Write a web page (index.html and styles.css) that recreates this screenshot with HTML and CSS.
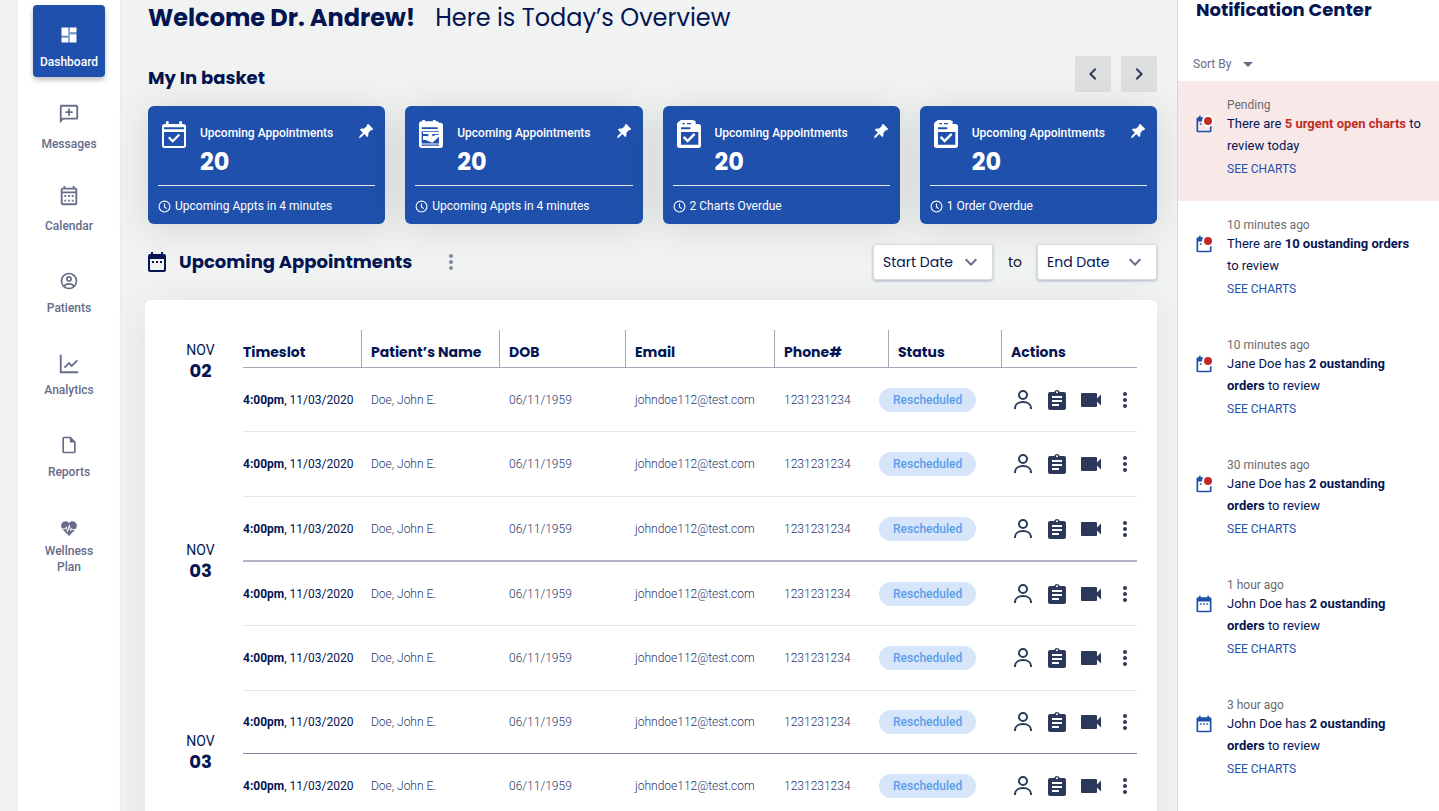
FILE: index.html
```html
<!DOCTYPE html>
<html lang="en">
<head>
<meta charset="utf-8">
<meta name="viewport" content="width=device-width, initial-scale=1">
<title>Dashboard</title>
<link rel="stylesheet" href="styles.css">
</head>
<body>
<svg class="sprite" aria-hidden="true">
  <symbol id="i-dash" viewBox="0 0 24 24"><path d="M3 3h8v10H3zM3 15h8v6H3zM13 3h8v6h-8zM13 11h8v10h-8z"/><path opacity=".5" d="M11 3h2v18h-2zM13 10h8v1h-8zM3 13h8v1H3z"/></symbol>
  <symbol id="i-msg" viewBox="0 0 24 24"><path d="M20 2H4a2 2 0 0 0-2 2v18l4-4h14a2 2 0 0 0 2-2V4a2 2 0 0 0-2-2zm0 14H5.200L4 17.200V4h16v12zM11 14h2v-3h3V9h-3V6h-2v3H8v2h3z"/></symbol>
  <symbol id="i-cal" viewBox="0 0 24 24"><path fill-rule="evenodd" d="M6 1h2v2h8V1h2v2h1a2 2 0 0 1 2 2v15a2 2 0 0 1-2 2H5a2 2 0 0 1-2-2V5a2 2 0 0 1 2-2h1zM5 5v2h14V5zm0 4v11h14V9zM7 11h2v2H7zm4 0h2v2h-2zm4 0h2v2h-2zM7 16h2v2H7zm4 0h2v2h-2zm4 0h2v2h-2z"/></symbol>
  <symbol id="i-acct" viewBox="0 0 24 24"><g fill="none" stroke="currentColor" stroke-width="2"><circle cx="12" cy="12" r="9"/><circle cx="12" cy="9.500" r="2.500"/><path d="M6 18.500c1-2 3.500-3 6-3s5 1 6 3"/></g></symbol>
  <symbol id="i-chart" viewBox="0 0 24 24"><path fill="none" stroke="currentColor" stroke-width="2" d="M3 2v19h19M7 16l5-5 3 3 6-6"/></symbol>
  <symbol id="i-file" viewBox="0 0 24 24"><path fill-rule="evenodd" d="M6 2h8l6 6v12a2 2 0 0 1-2 2H6a2 2 0 0 1-2-2V4a2 2 0 0 1 2-2zm0 2v16h12V9h-5V4z"/></symbol>
  <symbol id="i-heart" viewBox="0 0 24 24"><path d="M12 22.500 3.600 14C.5 10.500 1 5.800 4.500 3.800 7 2.300 10 3 12 5.500c2-2.500 5-3.200 7.500-1.700 3.500 2 4 6.700.9 10.200z"/><path fill="none" stroke="#fff" stroke-width="1.300" d="M3 13h4l1.500-2.500L10 17l2.500-9 1.500 8 1.500-3.500 1 1.500H21"/></symbol>
  <symbol id="i-gear" viewBox="0 0 24 24"><path d="M19.430 12.980c.04-.32.07-.64.07-.98s-.03-.66-.07-.98l2.110-1.650c.19-.15.24-.42.12-.64l-2-3.460c-.12-.22-.39-.3-.61-.22l-2.490 1c-.52-.4-1.080-.73-1.690-.98l-.38-2.650A.49.49 0 0 0 14 2h-4c-.25 0-.46.18-.49.42l-.38 2.650c-.61.25-1.170.59-1.690.98l-2.490-1c-.23-.09-.49 0-.61.22l-2 3.460c-.13.22-.07.49.12.64l2.110 1.650c-.04.32-.07.65-.07.98s.03.66.07.98l-2.110 1.650c-.19.15-.24.42-.12.64l2 3.460c.12.22.39.3.61.22l2.490-1c.52.4 1.080.73 1.690.98l.38 2.650c.03.24.24.42.49.42h4c.25 0 .46-.18.49-.42l.38-2.650c.61-.25 1.170-.59 1.690-.98l2.490 1c.23.09.49 0 .61-.22l2-3.460c.12-.22.07-.49-.12-.64zM12 15.500a3.500 3.500 0 1 1 0-7 3.500 3.500 0 0 1 0 7z"/></symbol>
  <symbol id="i-left" viewBox="0 0 24 24"><path d="M15.410 7.410 14 6l-6 6 6 6 1.410-1.410L10.830 12z"/></symbol>
  <symbol id="i-right" viewBox="0 0 24 24"><path d="M8.590 16.590 10 18l6-6-6-6-1.410 1.410L13.170 12z"/></symbol>
  <symbol id="i-down" viewBox="0 0 24 24"><path d="M16.590 8.590 12 13.170 7.410 8.590 6 10l6 6 6-6z"/></symbol>
  <symbol id="i-evcheck" viewBox="0 0 24 24"><path fill-rule="evenodd" d="M6 1h2v2h8V1h2v2h1a2 2 0 0 1 2 2v14a2 2 0 0 1-2 2H5a2 2 0 0 1-2-2V5a2 2 0 0 1 2-2h1zM4.500 5.500v1.500h15V5.500zm0 3.500v10.500h15V9z"/><path d="m11 17-3.500-3.500 1.100-1.100L11 14.800l4.500-4.500 1.100 1.100z"/></symbol>
  <symbol id="i-evstack" viewBox="0 0 24 24"><path fill-rule="evenodd" d="M5.500 1V0h2v1h6V0h2v1H17l1 1h1a2 2 0 0 1 2 2v15a2 2 0 0 1-2 2H5a2 2 0 0 1-2-2V3a2 2 0 0 1 2-2zM5 5.500v1.200h12V5.500zm0 3v9.200h13V8.500zm0 9.800v1h13v-1z"/><path d="M6 9h12v1.500H6zM6 12h3l2 1 5-2h2v1.500L13 17l-5-2H6zM10 9h3v4h-3z"/></symbol>
  <symbol id="i-clipcheck" viewBox="0 0 24 24"><path fill-rule="evenodd" d="M6 0h9l2 1v2h2a2 2 0 0 1 2 2v14a2 2 0 0 1-2 2H5a2 2 0 0 1-2-2V3a2 2 0 0 1 1-1.500zM7 2.300v.9h2v-.9zm3.500 0v.9h3v-.9zM6 5.500v1.500h7V5.500zM6 9v9.500h13V9z"/><path d="m11 17-3.700-3.700 1.300-1.300 2.400 2.400 4.600-4.600 1.300 1.300z"/></symbol>
  <symbol id="i-pin" viewBox="0 0 24 24"><path transform="rotate(45 12 12)" d="M6.500 0h11v3.500H16l.8 6.500c2 1 3.200 2.800 3.200 5h-6.500v6.500L12 25l-1.500-3.500V15H4c0-2.200 1.200-4 3.200-5L8 3.500H6.500z"/></symbol>
  <symbol id="i-clock" viewBox="0 0 24 24"><circle cx="12" cy="12" r="10" fill="none" stroke="currentColor" stroke-width="2"/><path fill="none" stroke="currentColor" stroke-width="2" d="M12 6.500V13l4 3"/></symbol>
  <symbol id="i-event" viewBox="0 0 24 24"><path fill-rule="evenodd" d="M6 2h2v2h8V2h2v2h1a2 2 0 0 1 2 2v14a2 2 0 0 1-2 2H5a2 2 0 0 1-2-2V6a2 2 0 0 1 2-2h1zM5 9v11h14V9zM7 11h2v2H7zm4 0h2v2h-2zm4 0h2v2h-2z"/></symbol>
  <symbol id="i-more" viewBox="0 0 24 24"><circle cx="12" cy="6" r="2"/><circle cx="12" cy="12" r="2"/><circle cx="12" cy="18" r="2"/></symbol>
  <symbol id="i-user" viewBox="0 0 24 24"><g fill="none" stroke="currentColor" stroke-width="2"><circle cx="12" cy="7" r="4"/><path d="M4 21v-1c0-3.500 3.200-6 8-6s8 2.500 8 6v1"/></g></symbol>
  <symbol id="i-clip" viewBox="0 0 24 24"><path fill-rule="evenodd" d="M5 4h4.200a3 3 0 0 1 5.600 0H19a2 2 0 0 1 2 2v14a2 2 0 0 1-2 2H5a2 2 0 0 1-2-2V6a2 2 0 0 1 2-2zm7-.8a1 1 0 1 0 0 2 1 1 0 0 0 0-2zM7 8v2h10V8zm0 4v2h10v-2zm0 4v2h7v-2z"/></symbol>
  <symbol id="i-video" viewBox="0 0 24 24"><path d="M3 5h14a1 1 0 0 1 1 1v4.500l4-4v11l-4-4V18a1 1 0 0 1-1 1H3a1 1 0 0 1-1-1V6a1 1 0 0 1 1-1z"/></symbol>
</svg>

<div class="app">
  <nav class="sidebar" aria-label="Main">
    <a class="nav-item nav-item-active" href="#"><svg class="nav-icon nav-icon-small"><use href="#i-dash"/></svg><span>Dashboard</span></a>
    <a class="nav-item" href="#"><svg class="nav-icon"><use href="#i-msg"/></svg><span>Messages</span></a>
    <a class="nav-item" href="#"><svg class="nav-icon"><use href="#i-cal"/></svg><span>Calendar</span></a>
    <a class="nav-item nav-item-low" href="#"><svg class="nav-icon nav-icon-small"><use href="#i-acct"/></svg><span>Patients</span></a>
    <a class="nav-item nav-item-low" href="#"><svg class="nav-icon"><use href="#i-chart"/></svg><span>Analytics</span></a>
    <a class="nav-item nav-item-low" href="#"><svg class="nav-icon nav-icon-small"><use href="#i-file"/></svg><span>Reports</span></a>
    <a class="nav-item nav-item-tall" href="#"><svg class="nav-icon nav-icon-heart"><use href="#i-heart"/></svg><span>Wellness Plan</span></a>
    <div class="sidebar-foot"><a class="settings" href="#" aria-label="Settings"><svg class="icon-20"><use href="#i-gear"/></svg></a></div>
  </nav>

  <main class="main">
    <h1 class="welcome"><strong>Welcome Dr. Andrew!</strong><span>Here is Today’s Overview</span></h1>

    <section class="basket">
      <div class="basket-head">
        <h2 class="section-title">My In basket</h2>
        <div class="pager">
          <button class="pager-btn" type="button" aria-label="Previous"><svg class="icon-24"><use href="#i-left"/></svg></button>
          <button class="pager-btn" type="button" aria-label="Next"><svg class="icon-24"><use href="#i-right"/></svg></button>
        </div>
      </div>
      <div class="cards">
        <article class="card">
          <div class="card-top"><svg class="card-icon"><use href="#i-evcheck"/></svg><div class="card-text"><h3 class="card-title">Upcoming Appointments</h3><p class="card-num">20</p></div><svg class="card-pin"><use href="#i-pin"/></svg></div>
          <p class="card-foot"><svg class="card-clock"><use href="#i-clock"/></svg>Upcoming Appts in 4 minutes</p>
        </article>
        <article class="card">
          <div class="card-top"><svg class="card-icon"><use href="#i-evstack"/></svg><div class="card-text"><h3 class="card-title">Upcoming Appointments</h3><p class="card-num">20</p></div><svg class="card-pin"><use href="#i-pin"/></svg></div>
          <p class="card-foot"><svg class="card-clock"><use href="#i-clock"/></svg>Upcoming Appts in 4 minutes</p>
        </article>
        <article class="card">
          <div class="card-top"><svg class="card-icon"><use href="#i-clipcheck"/></svg><div class="card-text"><h3 class="card-title">Upcoming Appointments</h3><p class="card-num">20</p></div><svg class="card-pin"><use href="#i-pin"/></svg></div>
          <p class="card-foot"><svg class="card-clock"><use href="#i-clock"/></svg>2 Charts Overdue</p>
        </article>
        <article class="card">
          <div class="card-top"><svg class="card-icon"><use href="#i-clipcheck"/></svg><div class="card-text"><h3 class="card-title">Upcoming Appointments</h3><p class="card-num">20</p></div><svg class="card-pin"><use href="#i-pin"/></svg></div>
          <p class="card-foot"><svg class="card-clock"><use href="#i-clock"/></svg>1 Order Overdue</p>
        </article>
      </div>
    </section>

    <div class="appt-head">
      <svg class="icon-24"><use href="#i-event"/></svg>
      <h2 class="section-title">Upcoming Appointments</h2>
      <button class="icon-btn appt-more" type="button" aria-label="More"><svg class="icon-24"><use href="#i-more"/></svg></button>
      <div class="range">
        <div class="date-field"><select class="date-select" aria-label="Start date"><option>Start Date</option></select><svg class="date-arrow"><use href="#i-down"/></svg></div>
        <span class="range-to">to</span>
        <div class="date-field"><select class="date-select" aria-label="End date"><option>End Date</option></select><svg class="date-arrow"><use href="#i-down"/></svg></div>
      </div>
    </div>

    <section class="panel">
      <ol class="days">
        <li class="day"><span>NOV</span><strong>02</strong></li>
        <li class="day"><span>NOV</span><strong>03</strong></li>
        <li class="day"><span>NOV</span><strong>03</strong></li>
      </ol>
      <table class="appts">
        <colgroup><col class="c-time"><col class="c-name"><col class="c-dob"><col class="c-email"><col class="c-phone"><col class="c-status"><col class="c-actions"></colgroup>
        <thead><tr><th scope="col">Timeslot</th><th scope="col">Patient’s Name</th><th scope="col">DOB</th><th scope="col">Email</th><th scope="col">Phone#</th><th scope="col">Status</th><th scope="col">Actions</th></tr></thead>
        <tbody>
          <tr><td><strong>4:00pm</strong>, 11/03/2020</td><td>Doe, John E.</td><td>06/11/1959</td><td>johndoe112@test.com</td><td>1231231234</td><td><span class="pill">Rescheduled</span></td><td><div class="actions"><button class="icon-btn" type="button" aria-label="Profile"><svg class="icon-24"><use href="#i-user"/></svg></button><button class="icon-btn" type="button" aria-label="Chart"><svg class="icon-24"><use href="#i-clip"/></svg></button><button class="icon-btn" type="button" aria-label="Video call"><svg class="icon-24"><use href="#i-video"/></svg></button><button class="icon-btn" type="button" aria-label="More"><svg class="icon-24"><use href="#i-more"/></svg></button></div></td></tr>
          <tr><td><strong>4:00pm</strong>, 11/03/2020</td><td>Doe, John E.</td><td>06/11/1959</td><td>johndoe112@test.com</td><td>1231231234</td><td><span class="pill">Rescheduled</span></td><td><div class="actions"><button class="icon-btn" type="button" aria-label="Profile"><svg class="icon-24"><use href="#i-user"/></svg></button><button class="icon-btn" type="button" aria-label="Chart"><svg class="icon-24"><use href="#i-clip"/></svg></button><button class="icon-btn" type="button" aria-label="Video call"><svg class="icon-24"><use href="#i-video"/></svg></button><button class="icon-btn" type="button" aria-label="More"><svg class="icon-24"><use href="#i-more"/></svg></button></div></td></tr>
          <tr class="row-thick"><td><strong>4:00pm</strong>, 11/03/2020</td><td>Doe, John E.</td><td>06/11/1959</td><td>johndoe112@test.com</td><td>1231231234</td><td><span class="pill">Rescheduled</span></td><td><div class="actions"><button class="icon-btn" type="button" aria-label="Profile"><svg class="icon-24"><use href="#i-user"/></svg></button><button class="icon-btn" type="button" aria-label="Chart"><svg class="icon-24"><use href="#i-clip"/></svg></button><button class="icon-btn" type="button" aria-label="Video call"><svg class="icon-24"><use href="#i-video"/></svg></button><button class="icon-btn" type="button" aria-label="More"><svg class="icon-24"><use href="#i-more"/></svg></button></div></td></tr>
        </tbody>
        <tbody>
          <tr><td><strong>4:00pm</strong>, 11/03/2020</td><td>Doe, John E.</td><td>06/11/1959</td><td>johndoe112@test.com</td><td>1231231234</td><td><span class="pill">Rescheduled</span></td><td><div class="actions"><button class="icon-btn" type="button" aria-label="Profile"><svg class="icon-24"><use href="#i-user"/></svg></button><button class="icon-btn" type="button" aria-label="Chart"><svg class="icon-24"><use href="#i-clip"/></svg></button><button class="icon-btn" type="button" aria-label="Video call"><svg class="icon-24"><use href="#i-video"/></svg></button><button class="icon-btn" type="button" aria-label="More"><svg class="icon-24"><use href="#i-more"/></svg></button></div></td></tr>
          <tr><td><strong>4:00pm</strong>, 11/03/2020</td><td>Doe, John E.</td><td>06/11/1959</td><td>johndoe112@test.com</td><td>1231231234</td><td><span class="pill">Rescheduled</span></td><td><div class="actions"><button class="icon-btn" type="button" aria-label="Profile"><svg class="icon-24"><use href="#i-user"/></svg></button><button class="icon-btn" type="button" aria-label="Chart"><svg class="icon-24"><use href="#i-clip"/></svg></button><button class="icon-btn" type="button" aria-label="Video call"><svg class="icon-24"><use href="#i-video"/></svg></button><button class="icon-btn" type="button" aria-label="More"><svg class="icon-24"><use href="#i-more"/></svg></button></div></td></tr>
          <tr class="row-last"><td><strong>4:00pm</strong>, 11/03/2020</td><td>Doe, John E.</td><td>06/11/1959</td><td>johndoe112@test.com</td><td>1231231234</td><td><span class="pill">Rescheduled</span></td><td><div class="actions"><button class="icon-btn" type="button" aria-label="Profile"><svg class="icon-24"><use href="#i-user"/></svg></button><button class="icon-btn" type="button" aria-label="Chart"><svg class="icon-24"><use href="#i-clip"/></svg></button><button class="icon-btn" type="button" aria-label="Video call"><svg class="icon-24"><use href="#i-video"/></svg></button><button class="icon-btn" type="button" aria-label="More"><svg class="icon-24"><use href="#i-more"/></svg></button></div></td></tr>
        </tbody>
        <tbody>
          <tr><td><strong>4:00pm</strong>, 11/03/2020</td><td>Doe, John E.</td><td>06/11/1959</td><td>johndoe112@test.com</td><td>1231231234</td><td><span class="pill">Rescheduled</span></td><td><div class="actions"><button class="icon-btn" type="button" aria-label="Profile"><svg class="icon-24"><use href="#i-user"/></svg></button><button class="icon-btn" type="button" aria-label="Chart"><svg class="icon-24"><use href="#i-clip"/></svg></button><button class="icon-btn" type="button" aria-label="Video call"><svg class="icon-24"><use href="#i-video"/></svg></button><button class="icon-btn" type="button" aria-label="More"><svg class="icon-24"><use href="#i-more"/></svg></button></div></td></tr>
        </tbody>
      </table>
    </section>
  </main>

  <aside class="notes">
    <h2 class="section-title notes-title">Notification Center</h2>
    <button class="sort" type="button">Sort By<span class="sort-arrow"></span></button>
    <ul class="note-list">
      <li class="note note-urgent"><span class="note-icon note-new"><svg class="icon-20"><use href="#i-event"/></svg></span><div><p class="note-time">Pending</p><p class="note-body">There are <strong>5 urgent open charts</strong> to review today</p><a class="note-link" href="#">SEE CHARTS</a></div></li>
      <li class="note"><span class="note-icon note-new"><svg class="icon-20"><use href="#i-event"/></svg></span><div><p class="note-time">10 minutes ago</p><p class="note-body">There are <strong>10 oustanding orders</strong> to review</p><a class="note-link" href="#">SEE CHARTS</a></div></li>
      <li class="note"><span class="note-icon note-new"><svg class="icon-20"><use href="#i-event"/></svg></span><div><p class="note-time">10 minutes ago</p><p class="note-body">Jane Doe has <strong>2 oustanding orders</strong> to review</p><a class="note-link" href="#">SEE CHARTS</a></div></li>
      <li class="note"><span class="note-icon note-new"><svg class="icon-20"><use href="#i-event"/></svg></span><div><p class="note-time">30 minutes ago</p><p class="note-body">Jane Doe has <strong>2 oustanding orders</strong> to review</p><a class="note-link" href="#">SEE CHARTS</a></div></li>
      <li class="note"><span class="note-icon"><svg class="icon-20"><use href="#i-event"/></svg></span><div><p class="note-time">1 hour ago</p><p class="note-body">John Doe has <strong>2 oustanding orders</strong> to review</p><a class="note-link" href="#">SEE CHARTS</a></div></li>
      <li class="note"><span class="note-icon"><svg class="icon-20"><use href="#i-event"/></svg></span><div><p class="note-time">3 hour ago</p><p class="note-body">John Doe has <strong>2 oustanding orders</strong> to review</p><a class="note-link" href="#">SEE CHARTS</a></div></li>
    </ul>
  </aside>
</div>
</body>
</html>
```

FILE: styles.css
```css
:root {
  --navy: #041552;
  --blue: #1f50ab;
  --slate: #666c89;
  --ink: #2c3859;
  --page: #f1f3f3;
  --display: Poppins, Inter, "Noto Sans", sans-serif;
}

*, *::before, *::after { box-sizing: border-box; }

body {
  margin: 0;
  background: var(--page);
  color: var(--navy);
  font: 12px/16px Roboto, "Liberation Sans", sans-serif;
}

h1, h2, h3, p, ul, ol { margin: 0; padding: 0; list-style: none; }
a { color: inherit; text-decoration: none; }
button { border: 0; padding: 0; background: none; color: inherit; font: inherit; cursor: pointer; }
svg { display: block; flex: none; fill: currentColor; }

.sprite { position: absolute; width: 0; height: 0; }
.icon-24 { width: 24px; height: 24px; }
.icon-20 { width: 20px; height: 20px; }
.icon-btn { display: block; }

.app {
  display: grid;
  grid-template-columns: 102px minmax(0, 1fr) 262px;
  height: 100vh;
  padding-left: 18px;
  overflow: hidden;
}

/* Sidebar */
.sidebar {
  display: flex;
  flex-direction: column;
  align-items: center;
  gap: 10px;
  padding: 5px 10px 4px;
  background: #fff;
  box-shadow: 0 0 2px rgba(0, 0, 0, .08);
}
.nav-item {
  display: flex;
  flex-direction: column;
  align-items: center;
  justify-content: space-between;
  width: 72px;
  height: 72px;
  padding: 16px 4px 7px;
  border-radius: 4px;
  color: var(--slate);
  font-weight: 500;
  text-align: center;
}
.nav-item-active {
  padding-top: 20px;
  background: var(--blue);
  color: #fff;
  box-shadow: 0 3px 5px rgba(0, 0, 0, .25);
}
.nav-item-low { padding-top: 20px; }
.nav-item-tall { height: 85px; padding-top: 22px; }
.nav-icon { width: 22px; height: 22px; }
.nav-icon-small { width: 20px; height: 20px; }
.nav-icon-heart { width: 18px; height: 18px; }
.sidebar-foot {
  display: flex;
  justify-content: center;
  align-self: stretch;
  margin-top: auto;
  padding-bottom: 28px;
  border-bottom: 1px solid #e8e8ea;
  color: var(--slate);
}

/* Main column */
.main { padding: 0 20px 0 25px; min-width: 0; }
.welcome {
  display: flex;
  gap: 20px;
  padding-left: 3px;
  font: 400 24px/36px var(--display);
  white-space: nowrap;
}
.section-title { font: 700 18px/28px var(--display); }
.basket { padding: 20px 0 0 3px; }
.basket-head { display: flex; align-items: flex-end; justify-content: space-between; min-height: 36px; }
.pager { display: flex; gap: 10px; }
.pager-btn {
  display: grid;
  place-items: center;
  width: 36px;
  height: 36px;
  border-radius: 3px;
  background: #dee0e0;
  color: var(--ink);
}
.cards {
  display: grid;
  grid-template-columns: repeat(4, minmax(0, 1fr));
  gap: 20px;
  margin-top: 14px;
}
.card {
  padding: 0 10px;
  border-radius: 6px;
  background: var(--blue);
  color: #fff;
  box-shadow: 0 4px 40px rgba(0, 0, 0, .12);
}
.card-top {
  display: flex;
  gap: 10px;
  height: 80px;
  padding-top: 14px;
  border-bottom: 1px solid #e4eaf5;
}
.card-icon { width: 32px; height: 32px; }
.card-text { flex: 1; padding-top: 4px; white-space: nowrap; }
.card-title { font: 500 12px/18px Roboto, sans-serif; }
.card-num { font: 700 24px/40px var(--display); }
.card-pin { width: 16px; height: 16px; margin: 4px 2px 0 0; }
.card-foot { display: flex; align-items: center; gap: 4px; height: 38px; padding-top: 2px; }
.card-clock { width: 13px; height: 13px; }

.appt-head { display: flex; align-items: center; gap: 10px; margin: 20px 0; }
.appt-more { margin-left: 17px; color: #858b9e; }
.range { display: flex; align-items: center; gap: 15px; margin-left: auto; font: 400 14px/20px var(--display); }
.range-to { color: #111; }
.date-field { position: relative; }
.date-select {
  appearance: none;
  display: block;
  width: 120px;
  height: 36px;
  padding: 0 9px;
  border: 1px solid #d9dbe2;
  border-radius: 3px;
  background: #fff;
  color: var(--navy);
  font: inherit;
  box-shadow: 0 1px 3px rgba(31, 60, 130, .35);
}
.date-arrow { position: absolute; top: 6px; right: 10px; width: 24px; height: 24px; color: var(--slate); pointer-events: none; }

/* Appointment table */
.panel {
  display: grid;
  grid-template-columns: 61px minmax(0, 1fr);
  align-items: start;
  gap: 12px;
  padding: 30px 20px 20px 25px;
  border-radius: 6px;
  background: #fff;
  box-shadow: 0 4px 40px rgba(0, 0, 0, .07);
}
.day {
  display: flex;
  flex-direction: column;
  align-items: center;
  height: 200px;
  padding-top: 10px;
  font-size: 14px;
  line-height: 20px;
}
.day:nth-child(2) { height: 191px; }
.day strong { font: 700 18px/22px var(--display); }

.appts { width: 100%; table-layout: fixed; border-collapse: separate; border-spacing: 0; }
.c-time { width: 118px; }
.c-name { width: 138px; }
.c-dob { width: 126px; }
.c-email { width: 149px; }
.c-phone { width: 114px; }
.c-status { width: 113px; }
.c-actions { width: 136px; }
.appts th {
  height: 38px;
  padding: 6px 0 0 9px;
  border-bottom: 1px solid #a4a9ba;
  border-left: 1px solid #a4a9ba;
  font: 700 14px/20px var(--display);
  text-align: left;
  white-space: nowrap;
}
.appts td {
  height: 65px;
  padding: 0 0 0 10px;
  border-bottom: 1px solid #e5e6ea;
  color: #26356b;
  font-weight: 300;
  white-space: nowrap;
}
.appts th:first-child, .appts td:first-child { padding-left: 0; border-left: 0; color: var(--navy); font-weight: 400; }
.appts th:first-child { font-weight: 700; }
.appts tr:first-child td { height: 64px; }
.appts .row-thick td { border-bottom: 2px solid #b1b4c6; }
.appts .row-last td { height: 63px; border-bottom-color: #858aa2; }
.pill {
  display: inline-block;
  margin-left: -19px;
  padding: 4px 14px;
  border-radius: 12px;
  background: #d6e5fa;
  color: #5a9eea;
  font-weight: 500;
}
.actions { display: flex; gap: 10px; color: var(--ink); }

/* Notifications */
.notes { border-left: 1px solid #d5d8da; background: #fff; }
.notes-title { height: 54px; padding-left: 18px; line-height: 20px; }
.sort {
  display: flex;
  align-items: center;
  gap: 12px;
  height: 27px;
  padding: 0 0 7px 15px;
  color: var(--slate);
}
.sort-arrow { border: 5px solid transparent; border-top-color: var(--slate); border-bottom: 0; }
.note { display: flex; gap: 13px; min-height: 120px; padding: 16px 16px 0 16px; }
.note-urgent { background: #f8e9e8; }
.note-urgent strong { color: #c12d25; }
.note-icon { position: relative; align-self: flex-start; padding-top: 17px; color: var(--blue); }
.note-new::after {
  content: "";
  position: absolute;
  top: 18px;
  right: 0;
  width: 12px;
  height: 12px;
  border: 2px solid #fff;
  border-radius: 50%;
  background: #c12d25;
}
.note-time { color: #6b6b6b; }
.note-body { line-height: 22px; font-size: 13px; }
.note-link { display: inline-block; color: var(--blue); line-height: 24px; }
```
